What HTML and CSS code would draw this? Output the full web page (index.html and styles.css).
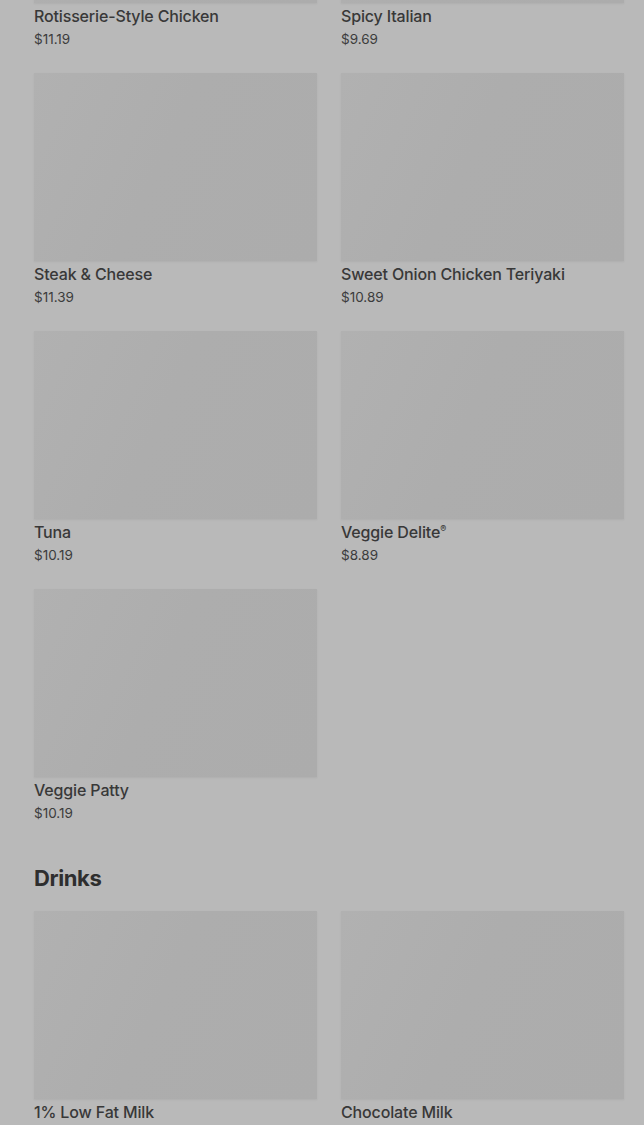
FILE: index.html
```html
<!DOCTYPE html>
<html>
<head>
<meta charset="utf-8">
<link rel="stylesheet" href="styles.css">
</head>
<body>
<main class="menu">
  <section class="category">
    <div class="grid first">
      <div class="item"><div class="thumb"></div><div class="name">Rotisserie-Style Chicken</div><div class="price">$11.19</div></div>
      <div class="item"><div class="thumb"></div><div class="name">Spicy Italian</div><div class="price">$9.69</div></div>
      <div class="item"><div class="thumb"></div><div class="name">Steak &amp; Cheese</div><div class="price">$11.39</div></div>
      <div class="item"><div class="thumb"></div><div class="name">Sweet Onion Chicken Teriyaki</div><div class="price">$10.89</div></div>
      <div class="item"><div class="thumb"></div><div class="name">Tuna</div><div class="price">$10.19</div></div>
      <div class="item"><div class="thumb"></div><div class="name">Veggie Delite<sup>®</sup></div><div class="price">$8.89</div></div>
      <div class="item"><div class="thumb"></div><div class="name">Veggie Patty</div><div class="price">$10.19</div></div>
    </div>
  </section>
  <section class="category">
    <h2 class="heading">Drinks</h2>
    <div class="grid">
      <div class="item"><div class="thumb"></div><div class="name">1% Low Fat Milk</div></div>
      <div class="item"><div class="thumb"></div><div class="name">Chocolate Milk</div></div>
    </div>
  </section>
</main>
</body>
</html>
```
FILE: styles.css
```css
html, body {
  margin: 0;
  padding: 0;
  background: #b9b9b9;
  overflow: hidden;
}
.menu {
  padding: 0 20px 0 34px;
  font-family: Inter, "Liberation Sans", sans-serif;
  color: #363636;
}
.grid {
  display: grid;
  grid-template-columns: 283px 283px;
  column-gap: 24px;
  row-gap: 25px;
}
.grid.first {
  margin-top: -185px;
}
.thumb {
  height: 188px;
  background: linear-gradient(115deg, #b1b1b1 0%, #adadad 45%, #acacac 100%);
  box-shadow: 0 1px 2px rgba(0,0,0,0.06);
}
.name {
  margin-top: 2px;
  font-size: 16px;
  line-height: 22px;
  font-weight: 500;
  letter-spacing: -0.15px;
  color: #383838;
}
.name sup {
  font-size: 9px;
  line-height: 0;
  vertical-align: 6px;
}
.price {
  margin-top: 3px;
  font-size: 13.5px;
  line-height: 18px;
  color: #3c3c3c;
}
.heading {
  margin: 42px 0 19px;
  font-size: 22px;
  line-height: 28px;
  font-weight: 700;
  letter-spacing: -0.4px;
  color: #2e2e2e;
}
```
